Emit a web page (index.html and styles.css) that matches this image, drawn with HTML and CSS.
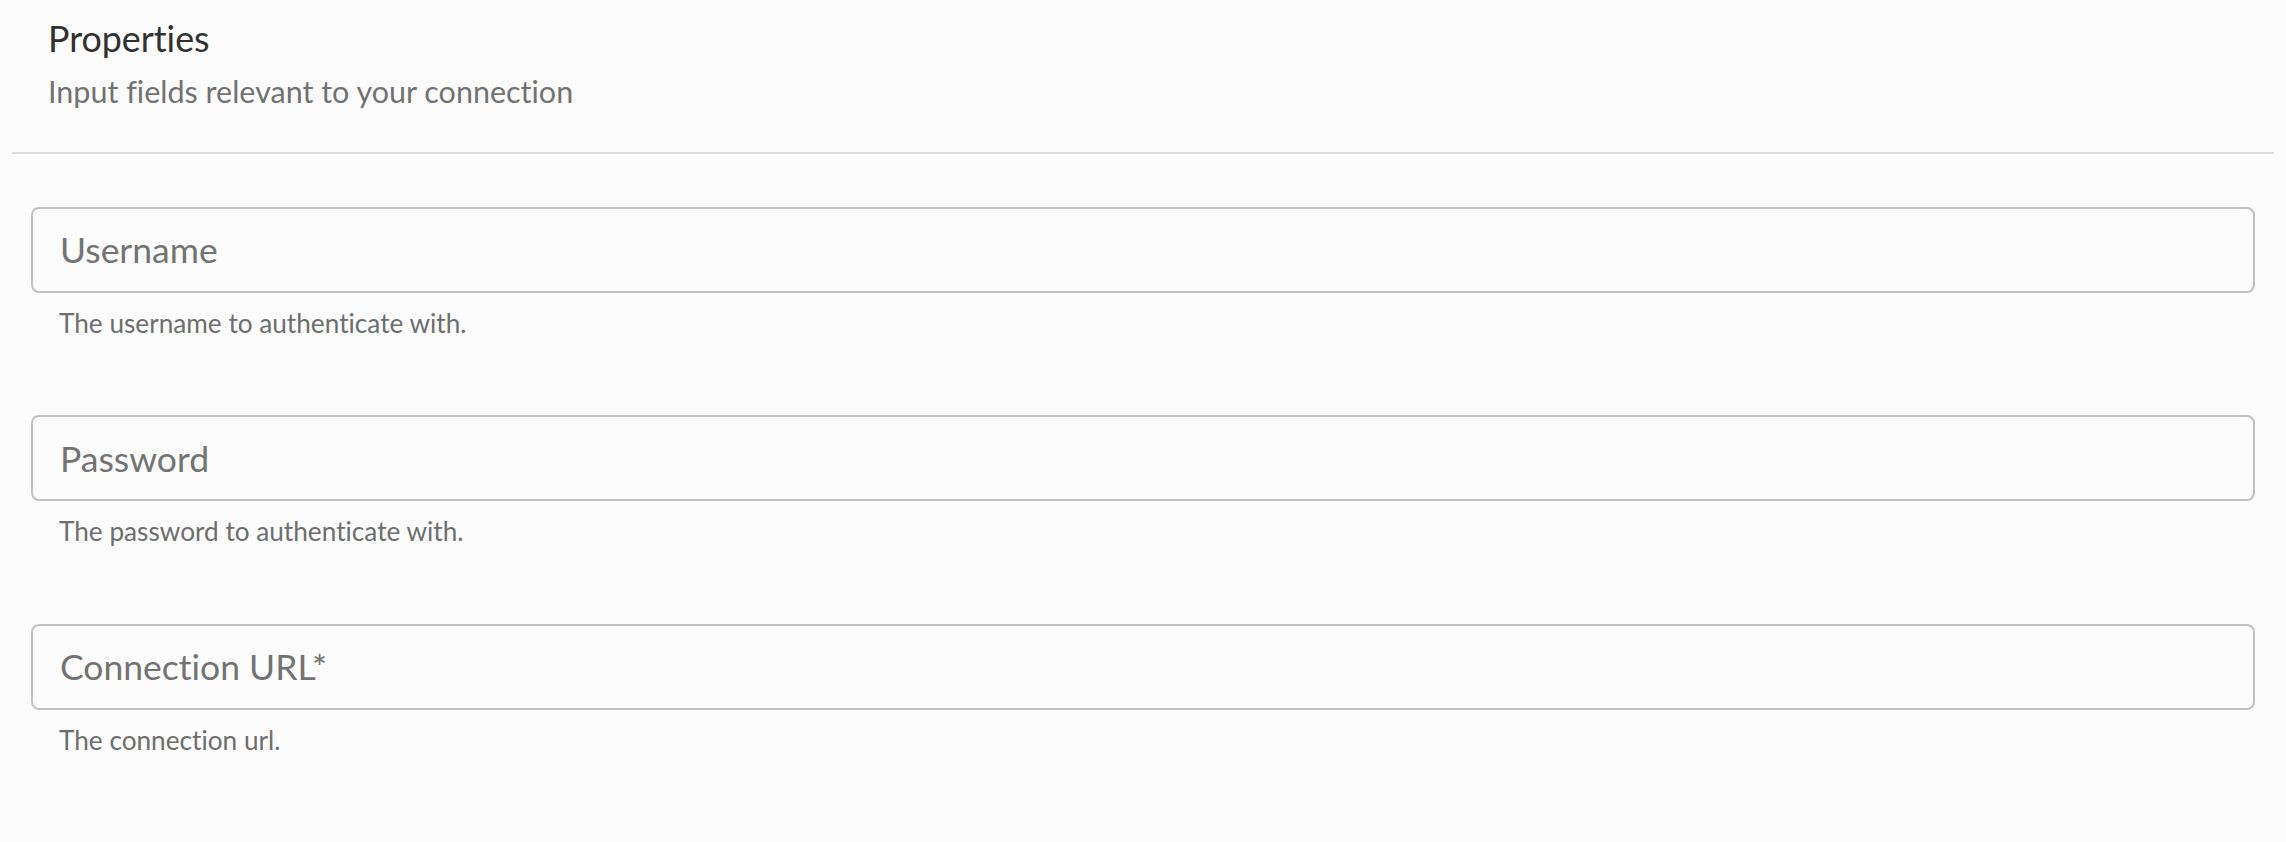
FILE: index.html
```html
<!DOCTYPE html>
<html lang="en">
    <head>
        <meta charset="UTF-8">
        <meta name="viewport" content="width=device-width, initial-scale=1.0">
        <title>Properties</title>
        <link rel="stylesheet" href="styles.css">
    </head>
    <body>
        <div class="properties-header">
            <h2 class="title">Properties</h2>
            <p class="subtitle">Input fields relevant to your connection</p>
        </div>
        <hr class="divider">

        <form class="properties-form">
            <div class="field">
                <input type="text" id="username" placeholder="Username">
                <p class="helper">The username to authenticate with.</p>
            </div>

            <div class="field">
                <input type="password" id="password" placeholder="Password">
                <p class="helper">The password to authenticate with.</p>
            </div>

            <div class="field">
                <input type="text" id="connectionUrl" placeholder="Connection URL*">
                <p class="helper">The connection url.</p>
            </div>
        </form>
    </body>
</html>
```

FILE: styles.css
```css
*{
    margin: 0;
    padding: 0;
    box-sizing: border-box;
}

body{
    background-color: #fcfcfc;
    font-family: Lato, "Open Sans", sans-serif;
    font-variant-ligatures: none;
}

.properties-header{
    padding: 18px 48px 0;
}

.title{
    font-size: 35.8px;
    font-weight: normal;
    line-height: 42px;
    color: #313131;
}

.subtitle{
    margin-top: 13px;
    font-size: 30.5px;
    line-height: 36px;
    color: #727272;
}

.divider{
    margin: 42.5px 12px 0;
    border: none;
    border-top: 2px solid #dedede;
}

.properties-form{
    display: flex;
    flex-direction: column;
    gap: 76.5px;
    padding: 53px 31px 0;
}

.field input{
    width: 100%;
    height: 86px;
    padding: 0 27px;
    border: 2px solid #c2c2c2;
    border-radius: 8px;
    outline: none;
    background-color: transparent;
    font-family: inherit;
    font-variant-ligatures: none;
    font-size: 35.5px;
    color: #333;
}

.field input::placeholder{
    color: #737373;
    opacity: 1;
}

.helper{
    margin: 15px 0 0 28px;
    font-size: 26.2px;
    line-height: 31px;
    color: #6e6e6e;
}
```
